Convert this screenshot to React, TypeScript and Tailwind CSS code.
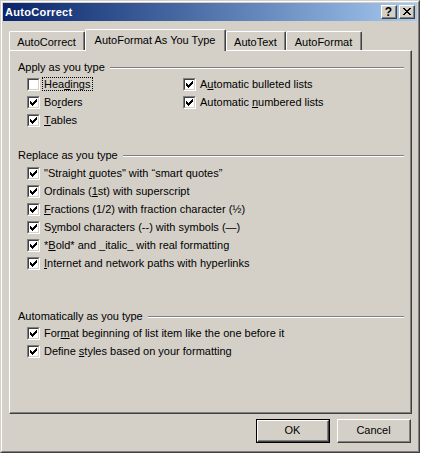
import React from "react";

const CHECK =
  "M6 0h1v1h-1z M5 1h2v1h-2z M0 2h1v1h-1z M4 2h3v1h-3z M0 3h2v1h-2z M3 3h3v1h-3z M0 4h5v1h-5z M1 5h3v1h-3z M2 6h1v1h-1z";

const CLOSE =
  "M0 0h2v1h-2z M6 0h2v1h-2z M1 1h2v1h-2z M5 1h2v1h-2z M2 2h4v1h-4z M3 3h2v1h-2z M2 4h4v1h-4z M1 5h2v1h-2z M5 5h2v1h-2z M0 6h2v1h-2z M6 6h2v1h-2z";

function CheckBox({ checked }: { checked: boolean }) {
  return (
    <div className="flex w-[13px] h-[13px] shrink-0 border border-t-[#808080] border-l-[#808080] border-r-white border-b-white">
      <div className="flex-1 border border-t-[#404040] border-l-[#404040] border-r-[#d4d0c8] border-b-[#d4d0c8] bg-white pl-px pt-px">
        {checked && (
          <svg width="7" height="7" viewBox="0 0 7 7" shapeRendering="crispEdges" className="block">
            <path d={CHECK} fill="#000" />
          </svg>
        )}
      </div>
    </div>
  );
}

// label is [before, underlined letter, after]
function Row({
  label,
  checked = true,
  focused = false,
}: {
  label: [string, string, string];
  checked?: boolean;
  focused?: boolean;
}) {
  return (
    <div className="flex items-center h-[18px]">
      <CheckBox checked={checked} />
      <span
        className={`ml-[2px] inline-flex items-center h-[14px] px-px leading-[12px] whitespace-pre border border-dotted ${
          focused ? "border-black" : "border-transparent"
        }`}
      >
        {label[0]}
        <span className="underline underline-offset-[1px]">{label[1]}</span>
        {label[2]}
      </span>
    </div>
  );
}

function GroupHeader({ title }: { title: string }) {
  return (
    <div className="flex items-center h-[14px] gap-[5px]">
      <span className="leading-[14px] whitespace-nowrap">{title}</span>
      <div className="flex-1 flex flex-col mt-px">
        <div className="h-px bg-[#808080]"></div>
        <div className="h-px bg-white"></div>
      </div>
    </div>
  );
}

function Tab({ label, selected = false, width }: { label: string; selected?: boolean; width: string }) {
  return (
    <div
      className={`flex border-t border-l border-r border-t-white border-l-white border-r-[#404040] rounded-tl-[2px] rounded-tr-[2px] bg-[#d4d0c8] ${width} ${
        selected ? "h-[22px] -mb-px relative z-10" : "h-[19px]"
      }`}
    >
      <div className="flex-1 flex justify-center border-r border-r-[#808080] pt-[3px]">
        <span className="leading-[14px] whitespace-nowrap">{label}</span>
      </div>
    </div>
  );
}

export default function App() {
  return (
    <div
      className="w-[424px] h-[457px] bg-white text-[11px] text-black"
      style={{ fontFamily: '"Liberation Sans", Arial, sans-serif' }}
    >
      {/* Window frame */}
      <div className="flex w-[420px] h-[453px] border border-t-[#d4d0c8] border-l-[#d4d0c8] border-r-[#404040] border-b-[#404040]">
        <div className="flex-1 flex border border-t-white border-l-white border-r-[#808080] border-b-[#808080] bg-[#d4d0c8]">
          <div className="flex-1 flex flex-col p-px">
            {/* Title bar */}
            <div className="flex items-center justify-between h-[18px] pl-[2px] pr-[2px] bg-gradient-to-r from-[#0a246a] to-[#a6caf0]">
              <span className="font-bold text-white leading-[14px] tracking-[0.3px]">AutoCorrect</span>
              <div className="flex gap-[2px]">
                <div className="flex w-[16px] h-[14px] border border-t-white border-l-white border-r-[#404040] border-b-[#404040] bg-[#d4d0c8]">
                  <div className="flex-1 flex items-center justify-center border-r border-b border-r-[#808080] border-b-[#808080]">
                    <span className="font-bold text-[12px] leading-[12px]">?</span>
                  </div>
                </div>
                <div className="flex w-[16px] h-[14px] border border-t-white border-l-white border-r-[#404040] border-b-[#404040] bg-[#d4d0c8]">
                  <div className="flex-1 flex items-center justify-center border-r border-b border-r-[#808080] border-b-[#808080]">
                    <svg width="8" height="7" viewBox="0 0 8 7" shapeRendering="crispEdges" className="block">
                      <path d={CLOSE} fill="#000" />
                    </svg>
                  </div>
                </div>
              </div>
            </div>

            {/* Tabs */}
            <div className="flex items-end h-[21px] mt-[8px] ml-[6px]">
              <Tab label="AutoCorrect" width="w-[76px]" />
              <Tab label="AutoFormat As You Type" width="w-[141px]" selected />
              <Tab label="AutoText" width="w-[60px]" />
              <Tab label="AutoFormat" width="w-[76px]" />
            </div>

            {/* Tab panel */}
            <div className="flex w-[403px] h-[364px] ml-[6px] border border-t-white border-l-white border-r-[#404040] border-b-[#404040]">
              <div className="flex-1 flex flex-col border-r border-b border-r-[#808080] border-b-[#808080] pl-[8px] pr-[6px] pt-[9px]">
                <GroupHeader title="Apply as you type" />
                <div className="grid grid-cols-[156px_1fr] mt-px pl-[9px]">
                  <div className="flex flex-col">
                    <Row label={["Hea", "d", "ings"]} checked={false} focused />
                    <Row label={["Bo", "r", "ders"]} />
                    <Row label={["", "T", "ables"]} />
                  </div>
                  <div className="flex flex-col">
                    <Row label={["A", "u", "tomatic bulleted lists"]} />
                    <Row label={["Automatic ", "n", "umbered lists"]} />
                  </div>
                </div>

                <div className="mt-[19px]">
                  <GroupHeader title="Replace as you type" />
                </div>
                <div className="flex flex-col mt-[2px] pl-[9px]">
                  <Row label={['"Straight ', "q", 'uotes" with \u201csmart quotes\u201d']} />
                  <Row label={["Ordinals (", "1", "st) with superscript"]} />
                  <Row label={["", "F", "ractions (1/2) with fraction character (\u00bd)"]} />
                  <Row label={["S", "y", "mbol characters (--) with symbols (\u2014)"]} />
                  <Row label={["*", "B", "old* and _italic_ with real formatting"]} />
                  <Row label={["", "I", "nternet and network paths with hyperlinks"]} />
                </div>

                <div className="mt-[37px]">
                  <GroupHeader title="Automatically as you type" />
                </div>
                <div className="flex flex-col mt-px pl-[9px]">
                  <Row label={["For", "m", "at beginning of list item like the one before it"]} />
                  <Row label={["Define ", "s", "tyles based on your formatting"]} />
                </div>
              </div>
            </div>

            {/* Buttons */}
            <div className="flex justify-end gap-[7px] mt-[5px] pr-[6px]">
              <div className="flex w-[74px] h-[24px] border border-black">
                <div className="flex-1 flex border border-t-white border-l-white border-r-[#404040] border-b-[#404040]">
                  <div className="flex-1 flex items-center justify-center border-r border-b border-r-[#808080] border-b-[#808080]">
                    OK
                  </div>
                </div>
              </div>
              <div className="flex w-[74px] h-[24px] border border-t-white border-l-white border-r-[#404040] border-b-[#404040]">
                <div className="flex-1 flex items-center justify-center border-r border-b border-r-[#808080] border-b-[#808080]">
                  Cancel
                </div>
              </div>
            </div>
          </div>
        </div>
      </div>
    </div>
  );
}
